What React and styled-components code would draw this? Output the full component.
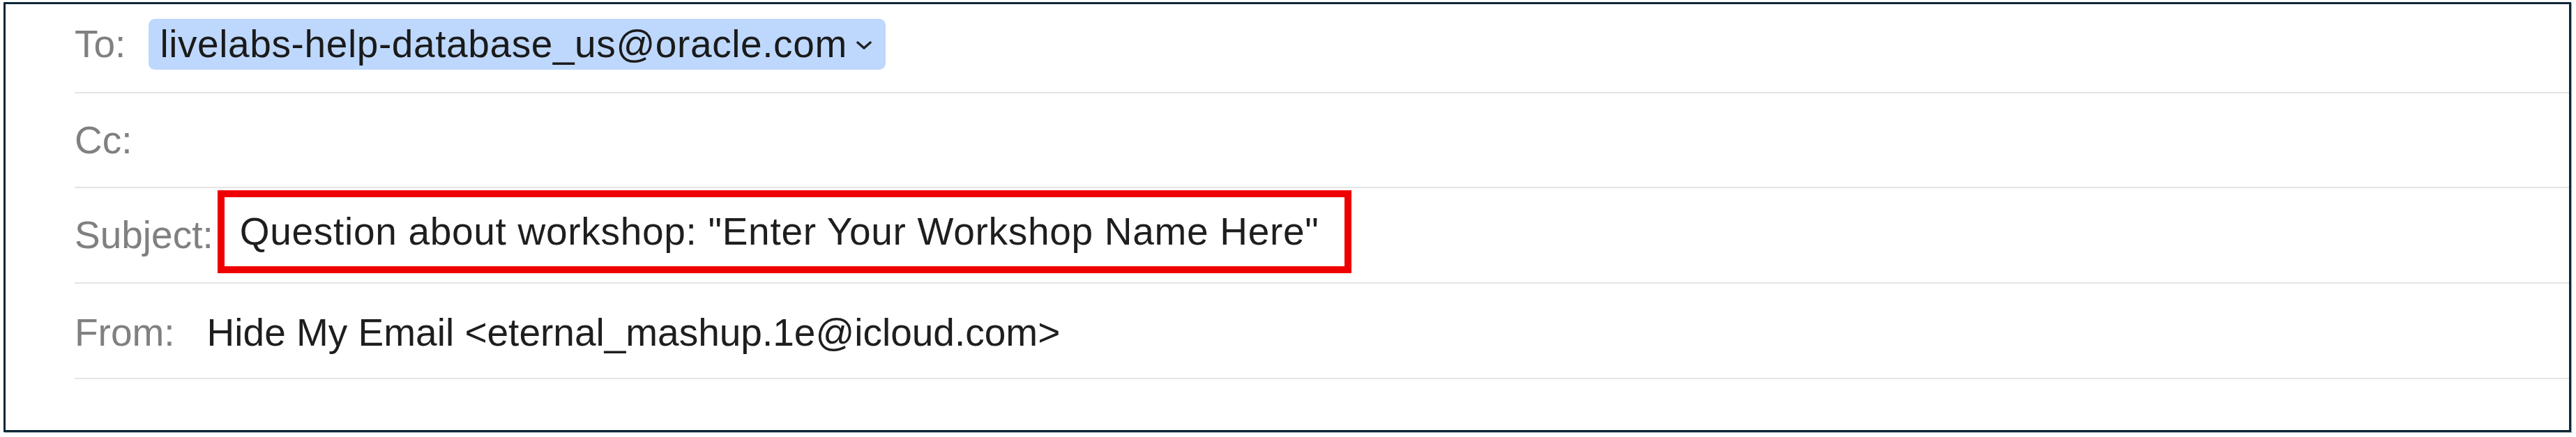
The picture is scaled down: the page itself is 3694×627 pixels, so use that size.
import styled, { createGlobalStyle } from "styled-components";

const GlobalStyle = createGlobalStyle`
    html, body {
        margin: 0;
        padding: 0;
        background: #ffffff;
    }
    body {
        font-family: "Liberation Sans", Arial, Helvetica, sans-serif;
    }
`;

function App() {
    return (
        <>
            <GlobalStyle />
            <Page>
                <Frame>
                    <Row height={128} shift={12}>
                        <Label>To:</Label>
                        <Recipient gap={33}>
                            livelabs-help-database_us@oracle.com
                            <Chevron viewBox="0 0 24 12">
                                <polyline points="3,2 12,10 21,2" />
                            </Chevron>
                        </Recipient>
                    </Row>
                    <Row height={136}>
                        <Label>Cc:</Label>
                    </Row>
                    <Row height={137}>
                        <Label>Subject:</Label>
                        <Highlight gap={6}>
                            Question about workshop: "Enter Your Workshop Name Here"
                        </Highlight>
                    </Row>
                    <Row height={137} shift={-6}>
                        <Label>From:</Label>
                        <Value gap={46}>Hide My Email &lt;eternal_mashup.1e@icloud.com&gt;</Value>
                    </Row>
                </Frame>
            </Page>
        </>
    );
}

export default App;

const Page = styled.div`
    padding: 3px 0 0 5px;
    width: 3694px;
    height: 627px;
    box-sizing: border-box;
`;

const Frame = styled.div`
    width: 3682px;
    height: 617px;
    box-sizing: border-box;
    border: 3px solid #0d2636;
    box-shadow: 1px 1px 1px rgba(13, 38, 54, 0.35);
    padding-left: 99px;
    display: flex;
    flex-direction: column;
`;

const Row = styled.div`
    display: flex;
    align-items: center;
    flex-shrink: 0;
    height: ${(p) => p.height}px;
    padding-bottom: ${(p) => (p.shift > 0 ? p.shift : 0)}px;
    padding-top: ${(p) => (p.shift < 0 ? -p.shift : 0)}px;
    box-sizing: border-box;
    border-bottom: 2px solid #e4e4e4;
    font-size: 55px;
    line-height: 1;
`;

const Label = styled.span`
    color: #808080;
    white-space: nowrap;
`;

const Value = styled.span`
    margin-left: ${(p) => p.gap}px;
    color: #1e1e1e;
    white-space: nowrap;
`;

const Recipient = styled.span`
    margin-left: ${(p) => p.gap}px;
    display: flex;
    align-items: center;
    height: 73px;
    padding: 0 19px 0 16px;
    border-radius: 9px;
    background: #bed8fd;
    color: #1a1a1a;
    letter-spacing: 0.6px;
    white-space: nowrap;
`;

const Chevron = styled.svg`
    width: 24px;
    height: 12px;
    margin-left: 12px;
    margin-top: 4px;
    fill: none;
    stroke: #222;
    stroke-width: 3.5;
    stroke-linecap: round;
    stroke-linejoin: round;
`;

const Highlight = styled.span`
    margin-left: ${(p) => p.gap}px;
    margin-bottom: 10px;
    display: flex;
    align-items: center;
    height: 99px;
    padding: 0 36px 0 22px;
    border: 10px solid #ee0000;
    color: #1e1e1e;
    letter-spacing: 0.7px;
    white-space: nowrap;
`;
